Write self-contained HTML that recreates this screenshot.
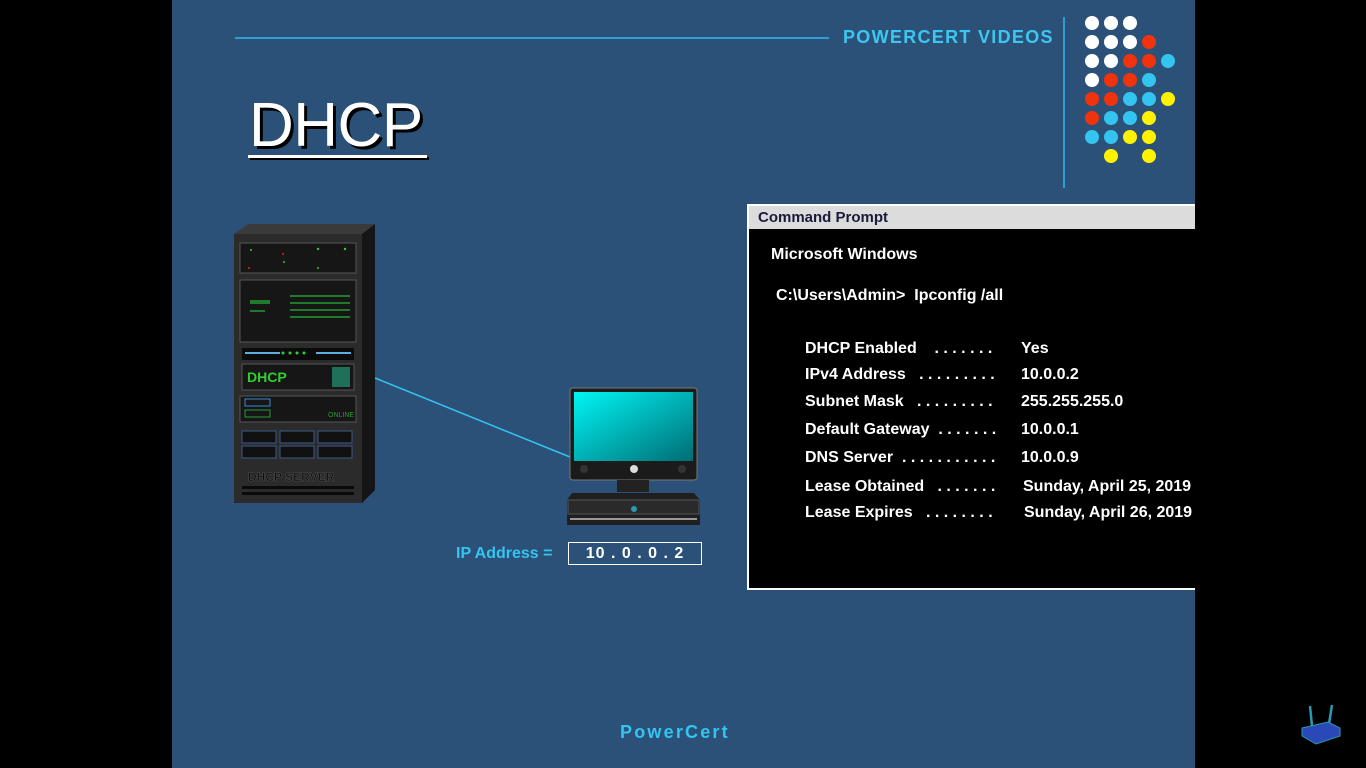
<!DOCTYPE html>
<html><head><meta charset="utf-8"><style>
*{margin:0;padding:0;box-sizing:border-box}
body{width:1366px;height:768px;background:#000;position:relative;overflow:hidden;font-family:"Liberation Sans",Arial,sans-serif}
#slide{position:absolute;left:172px;top:0;width:1023px;height:768px;background:#2c5179}
.a{position:absolute}
.dot{position:absolute;width:14px;height:14px;border-radius:50%}
.cmd{position:absolute;left:747px;top:204px;width:452px;height:386px;border:2px solid #fff;border-right:none;background:#000}
.cmd .bar{height:23px;background:#dcdcdc;color:#1a1a3a;font-weight:bold;font-size:15px;padding:3px 0 0 9px}
.t{position:absolute;color:#fff;font-weight:bold;font-size:16px;white-space:nowrap}
</style></head><body>
<div id="slide"></div>
<div class="a" style="left:235px;top:37px;width:594px;height:2px;background:#2e9fd0"></div>
<div class="a" style="left:843px;top:27px;color:#3cc7f0;font-weight:bold;font-size:18px;letter-spacing:1.3px">POWERCERT VIDEOS</div>
<div class="a" style="left:1063px;top:17px;width:2px;height:171px;background:#2e9fd0"></div>
<div class="a" style="left:249px;top:90px;color:#fff;font-size:62px;text-shadow:3px 3px 0 #000;letter-spacing:-0.5px">DHCP</div>
<div class="a" style="left:248px;top:155px;width:179px;height:3px;background:#fff;box-shadow:2px 2px 0 #000"></div>
<div id="dots"></div>
<script>
var rows=["WWW","WWWR","WWRRB","WRRB","RRBBY","RBBY","BBYY"," Y Y"];
var col={W:"#fff",R:"#f0330c",B:"#33c5f0",Y:"#fff200"};
var h="";rows.forEach(function(r,i){for(var j=0;j<r.length;j++){if(r[j]==" ")continue;h+='<div class="dot" style="left:'+(1085+j*19)+'px;top:'+(16+i*19)+'px;background:'+col[r[j]]+'"></div>';}});
document.getElementById("dots").innerHTML=h;
</script>
<svg class="a" style="left:0;top:0" width="1366" height="768">
<line x1="375" y1="378" x2="570" y2="457" stroke="#33c5f0" stroke-width="1.5"/>
<polygon points="234,234 248,224 375,224 362,234" fill="#3a3a3a"/>
<polygon points="362,234 375,224 375,490 362,503" fill="#151515"/>
<rect x="234" y="234" width="128" height="269" fill="#2b2b2b"/>
<rect x="240" y="243" width="116" height="30" fill="#161616" stroke="#555"/>
<rect x="240" y="280" width="116" height="62" fill="#161616" stroke="#555"/>
<g fill="#1f7a2a"><rect x="290" y="295" width="60" height="2"/><rect x="290" y="302" width="60" height="2"/><rect x="290" y="309" width="60" height="2"/><rect x="290" y="316" width="60" height="2"/><rect x="250" y="300" width="20" height="4"/><rect x="250" y="310" width="15" height="2"/></g>
<rect x="242" y="348" width="112" height="12" fill="#0b0b0b"/>
<rect x="245" y="352" width="35" height="2" fill="#5ab0e0"/><rect x="316" y="352" width="35" height="2" fill="#5ab0e0"/>
<rect x="242" y="364" width="112" height="26" fill="#161616" stroke="#555"/>
<text x="247" y="382" fill="#2fd02f" font-family="Liberation Sans" font-weight="bold" font-size="14">DHCP</text>
<rect x="332" y="367" width="18" height="20" fill="#1f6f5a"/>
<rect x="240" y="396" width="116" height="26" fill="#161616" stroke="#555"/>
<rect x="245" y="399" width="25" height="7" fill="none" stroke="#3a8ad0"/>
<rect x="245" y="410" width="25" height="7" fill="none" stroke="#2a9a3a"/>
<text x="328" y="417" fill="#2a9a3a" font-size="7" font-family="Liberation Sans">ONLINE</text>
<g fill="#111" stroke="#3a5a8a"><rect x="242" y="431" width="34" height="12"/><rect x="280" y="431" width="34" height="12"/><rect x="318" y="431" width="34" height="12"/><rect x="242" y="446" width="34" height="12"/><rect x="280" y="446" width="34" height="12"/><rect x="318" y="446" width="34" height="12"/></g>
<text x="248" y="481" fill="#0d0d0d" stroke="#555" stroke-width="0.5" font-family="Liberation Sans" font-weight="bold" font-size="12">DHCP SERVER</text>
<rect x="242" y="486" width="112" height="3" fill="#0a0a0a"/><rect x="242" y="492" width="112" height="3" fill="#0a0a0a"/>
<g fill="#2fd02f"><circle cx="251" cy="250" r="1"/><circle cx="318" cy="249" r="1.2"/><circle cx="345" cy="249" r="1.2"/><circle cx="284" cy="262" r="1"/><circle cx="318" cy="268" r="1"/><circle cx="283" cy="353" r="1.5"/><circle cx="290" cy="353" r="1.5"/><circle cx="297" cy="353" r="1.5"/><circle cx="304" cy="353" r="1.5"/></g>
<g fill="#ee2222"><circle cx="249" cy="268" r="1"/><circle cx="283" cy="254" r="1"/></g>
<rect x="570" y="388" width="127" height="92" rx="3" fill="#1b1b1b" stroke="#777"/>
<defs><linearGradient id="g" x1="0" y1="0" x2="1" y2="1"><stop offset="0" stop-color="#00f5f5"/><stop offset="1" stop-color="#006d74"/></linearGradient></defs>
<rect x="574" y="392" width="119" height="69" fill="url(#g)"/>
<circle cx="634" cy="469" r="4" fill="#ddd"/>
<circle cx="584" cy="469" r="4" fill="#333"/><circle cx="682" cy="469" r="4" fill="#333"/>
<rect x="617" y="480" width="32" height="12" fill="#222"/>
<polygon points="572,493 694,493 700,500 700,525 567,525 567,500" fill="#1f1f1f"/>
<rect x="568" y="500" width="131" height="14" fill="#2a2a2a" stroke="#555"/>
<rect x="570" y="518" width="127" height="2" fill="#999"/>
<circle cx="634" cy="509" r="3" fill="#2a9ab0"/>
</svg>
<div class="a" style="left:456px;top:545px;color:#33c5f0;font-weight:bold;font-size:16px">IP Address =</div>
<div class="a" style="left:568px;top:542px;width:134px;height:23px;border:1px solid #fff;color:#fff;font-weight:bold;font-size:16px;text-align:center;line-height:21px;letter-spacing:1px">10 . 0 . 0 . 2</div>
<div class="cmd"><div class="bar">Command Prompt</div></div>
<div class="t" style="left:771px;top:246px">Microsoft Windows</div>
<div class="t" style="left:776px;top:287px">C:\Users\Admin&gt;&nbsp; Ipconfig /all</div>
<div class="t" style="left:805px;top:340px">DHCP Enabled&nbsp;&nbsp;&nbsp; . . . . . . .</div><div class="t" style="left:1021px;top:340px">Yes</div>
<div class="t" style="left:805px;top:366px">IPv4 Address&nbsp;&nbsp; . . . . . . . . .</div><div class="t" style="left:1021px;top:366px">10.0.0.2</div>
<div class="t" style="left:805px;top:393px">Subnet Mask&nbsp;&nbsp; . . . . . . . . .</div><div class="t" style="left:1021px;top:393px">255.255.255.0</div>
<div class="t" style="left:805px;top:421px">Default Gateway&nbsp; . . . . . . .</div><div class="t" style="left:1021px;top:421px">10.0.0.1</div>
<div class="t" style="left:805px;top:449px">DNS Server&nbsp; . . . . . . . . . . .</div><div class="t" style="left:1021px;top:449px">10.0.0.9</div>
<div class="t" style="left:805px;top:478px">Lease Obtained&nbsp;&nbsp; . . . . . . .</div><div class="t" style="left:1023px;top:478px">Sunday, April 25, 2019</div>
<div class="t" style="left:805px;top:504px">Lease Expires&nbsp;&nbsp; . . . . . . . .</div><div class="t" style="left:1024px;top:504px">Sunday, April 26, 2019</div>
<div class="a" style="left:1195px;top:0;width:171px;height:768px;background:#000"></div>
<div class="a" style="left:620px;top:722px;color:#33c5f0;font-weight:bold;font-size:18px;letter-spacing:2.2px">PowerCert</div>
<svg class="a" style="left:1298px;top:702px" width="46" height="44"><line x1="14" y1="24" x2="12" y2="4" stroke="#2a9ab0" stroke-width="2.5"/><line x1="31" y1="22" x2="34" y2="3" stroke="#2a9ab0" stroke-width="2.5"/><polygon points="4,26 30,20 42,26 42,34 18,42 4,34" fill="#2a48b8" stroke="#2a9ab0"/></svg>
</body></html>
